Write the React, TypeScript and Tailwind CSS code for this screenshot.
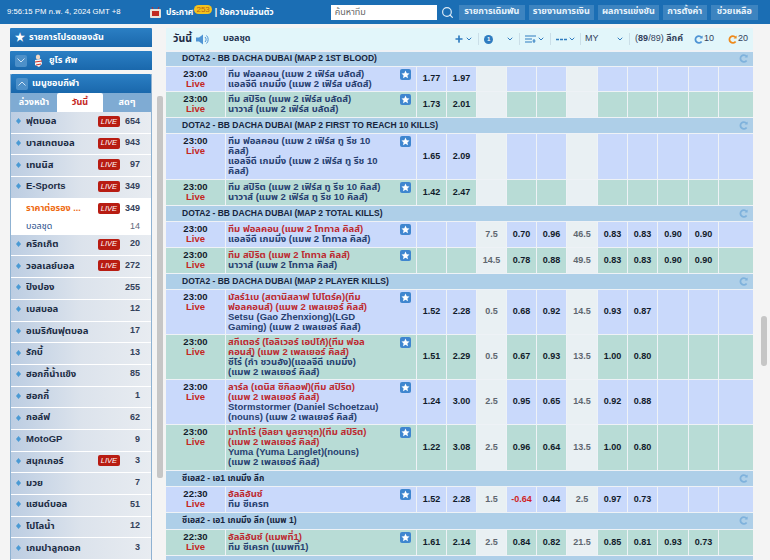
import { Search, Plus, ChevronDown } from 'lucide-react';

const font = "font-['Liberation_Sans','Noto_Sans_Thai',sans-serif]";

const gridCols =
  'grid shrink-0 grid-cols-[59px_190px_29px_29px_29px_29px_29px_30px_29px_29px_30px_29px_34px] gap-x-px';

type Row = {
  time?: string;
  home: string[];
  away: string[];
  h: string;
  tone: 'blue' | 'green';
  homeRed?: boolean;
  odds: string[];
};

type Section = { title: string; h: string; rows: Row[] };

const sections: Section[] = [
  {
    title: 'DOTA2 - BB DACHA DUBAI (MAP 2 1ST BLOOD)',
    h: 'h-[14px]',
    rows: [
      { home: ['ทีม ฟอลคอน (แมพ 2 เฟิร์ส บลัดส์)'], away: ['แอลจีดี เกมมิ่ง (แมพ 2 เฟิร์ส บลัดส์)'], h: 'h-[24px]', tone: 'blue', odds: ['1.77', '1.97'] },
      { home: ['ทีม สปิริต (แมพ 2 เฟิร์ส บลัดส์)'], away: ['นาวาส์ (แมพ 2 เฟิร์ส บลัดส์)'], h: 'h-[25px]', tone: 'green', odds: ['1.73', '2.01'] },
    ],
  },
  {
    title: 'DOTA2 - BB DACHA DUBAI (MAP 2 FIRST TO REACH 10 KILLS)',
    h: 'h-[15px]',
    rows: [
      { home: ['ทีม ฟอลคอน (แมพ 2 เฟิร์ส ทู รีช 10', 'คิลส์)'], away: ['แอลจีดี เกมมิ่ง (แมพ 2 เฟิร์ส ทู รีช 10', 'คิลส์)'], h: 'h-[45px]', tone: 'blue', odds: ['1.65', '2.09'] },
      { home: ['ทีม สปิริต (แมพ 2 เฟิร์ส ทู รีช 10 คิลส์)'], away: ['นาวาส์ (แมพ 2 เฟิร์ส ทู รีช 10 คิลส์)'], h: 'h-[25px]', tone: 'green', odds: ['1.42', '2.47'] },
    ],
  },
  {
    title: 'DOTA2 - BB DACHA DUBAI (MAP 2 TOTAL KILLS)',
    h: 'h-[15px]',
    rows: [
      { home: ['ทีม ฟอลคอน (แมพ 2 โททาล คิลส์)'], away: ['แอลจีดี เกมมิ่ง (แมพ 2 โททาล คิลส์)'], h: 'h-[25px]', tone: 'blue', homeRed: true, odds: ['', '', '7.5', '0.70', '0.96', '46.5', '0.83', '0.83', '0.90', '0.90'] },
      { home: ['ทีม สปิริต (แมพ 2 โททาล คิลส์)'], away: ['นาวาส์ (แมพ 2 โททาล คิลส์)'], h: 'h-[25px]', tone: 'green', homeRed: true, odds: ['', '', '14.5', '0.78', '0.88', '49.5', '0.83', '0.83', '0.90', '0.90'] },
    ],
  },
  {
    title: 'DOTA2 - BB DACHA DUBAI (MAP 2 PLAYER KILLS)',
    h: 'h-[15px]',
    rows: [
      { home: ['มัลร์1เบ (สตานิสลาฟ โปโตร์ค)(ทีม', 'ฟอลคอนส์) (แมพ 2 เพลเยอร์ คิลส์)'], away: ['Setsu (Gao Zhenxiong)(LGD', 'Gaming) (แมพ 2 เพลเยอร์ คิลส์)'], h: 'h-[44px]', tone: 'blue', homeRed: true, odds: ['1.52', '2.28', '0.5', '0.68', '0.92', '14.5', '0.93', '0.87'] },
      { home: ['สกีเตอร์ (โอลิเวอร์ เอปโก้)(ทีม ฟอล', 'คอนส์) (แมพ 2 เพลเยอร์ คิลส์)'], away: ['ซีโร่ (ก้ำ ชวนอัง)(แอลจีดี เกมมิ่ง)', '(แมพ 2 เพลเยอร์ คิลส์)'], h: 'h-[44px]', tone: 'green', homeRed: true, odds: ['1.51', '2.29', '0.5', '0.67', '0.93', '13.5', '1.00', '0.80'] },
      { home: ['ลาร์ล (เดนิส ซิกิลอฟ)(ทีม สปิริต)', '(แมพ 2 เพลเยอร์ คิลส์)'], away: ['Stormstormer (Daniel Schoetzau)', '(nouns) (แมพ 2 เพลเยอร์ คิลส์)'], h: 'h-[44px]', tone: 'blue', homeRed: true, odds: ['1.24', '3.00', '2.5', '0.95', '0.65', '14.5', '0.92', '0.88'] },
      { home: ['มาโทโร่ (อิลยา มูลยาชุก)(ทีม สปิริต)', '(แมพ 2 เพลเยอร์ คิลส์)'], away: ['Yuma (Yuma Langlet)(nouns)', '(แมพ 2 เพลเยอร์ คิลส์)'], h: 'h-[45px]', tone: 'green', homeRed: true, odds: ['1.22', '3.08', '2.5', '0.96', '0.64', '13.5', '1.00', '0.80'] },
    ],
  },
  {
    title: 'ซีเอส2 - เอ1 เกมมิ่ง ลีก',
    h: 'h-[15px]',
    rows: [
      { time: '22:30', home: ['อัลลิอันซ์'], away: ['ทีม ซีเครท'], h: 'h-[25px]', tone: 'blue', homeRed: true, odds: ['1.52', '2.28', '1.5', '-0.64', '0.44', '2.5', '0.97', '0.73'] },
    ],
  },
  {
    title: 'ซีเอส2 - เอ1 เกมมิ่ง ลีก (แมพ 1)',
    h: 'h-[16px]',
    rows: [
      { time: '22:30', home: ['อัลลิอันซ์ (แมพที่1)'], away: ['ทีม ซีเครท (แมพที่1)'], h: 'h-[25px]', tone: 'green', homeRed: true, odds: ['1.61', '2.14', '2.5', '0.84', '0.82', '21.5', '0.85', '0.81', '0.93', '0.73'] },
    ],
  },
];

const sports: { name: string; count: string; live?: boolean }[] = [
  { name: 'ฟุตบอล', count: '654', live: true },
  { name: 'บาสเกตบอล', count: '943', live: true },
  { name: 'เทนนิส', count: '97', live: true },
  { name: 'E-Sports', count: '349', live: true },
  { name: 'คริกเก็ต', count: '20', live: true },
  { name: 'วอลเลย์บอล', count: '272', live: true },
  { name: 'ปิงปอง', count: '255' },
  { name: 'เบสบอล', count: '12' },
  { name: 'อเมริกันฟุตบอล', count: '17' },
  { name: 'รักบี้', count: '13' },
  { name: 'ฮอกกี้น้ำแข็ง', count: '85' },
  { name: 'ฮอกกี้', count: '1' },
  { name: 'กอล์ฟ', count: '62' },
  { name: 'MotoGP', count: '9' },
  { name: 'สนุกเกอร์', count: '3', live: true },
  { name: 'มวย', count: '7' },
  { name: 'แฮนด์บอล', count: '51' },
  { name: 'โปโลน้ำ', count: '12' },
  { name: 'เกมปาลูกดอก', count: '3' },
];

const StarBox = () => (
  <svg width="11" height="11" viewBox="0 0 11 11" className="shrink-0">
    <rect width="11" height="11" rx="2" fill="#3f86cf" />
    <path d="M5.5 1.6l1.2 2.6 2.8.3-2.1 1.9.6 2.8-2.5-1.4-2.5 1.4.6-2.8L1.5 4.5l2.8-.3z" fill="#fff" />
  </svg>
);

const Refresh = ({ color = '#7fb2dc' }: { color?: string }) => (
  <svg width="9" height="9" viewBox="0 0 9 9" className="shrink-0">
    <path d="M7.4 2.2A3.4 3.4 0 1 0 7.6 6.4" fill="none" stroke={color} strokeWidth="1.8" />
    <path d="M8.6 0.6v3H5.6z" fill={color} />
  </svg>
);

const LiveBadge = () => (
  <span className="flex h-[11px] w-[22px] shrink-0 items-center justify-center rounded-[2px] bg-[#b81c12] text-[7.5px] italic text-white">
    LIVE
  </span>
);

const Arrow = () => (
  <svg width="5" height="6" viewBox="0 0 5 6" className="shrink-0">
    <path d="M0 3l2.5-3L5 3 2.5 6z" fill="#4a9ad4" />
  </svg>
);

const SideHead = ({ children }: { children: React.ReactNode }) => (
  <div className="flex h-[19px] shrink-0 items-center gap-1 rounded-t-[1px] bg-gradient-to-b from-[#2b7fc4] to-[#1a68ac] px-[5px] text-[9px] font-bold text-white">
    {children}
  </div>
);

const Chev = ({ up }: { up?: boolean }) => (
  <span className="flex h-3 w-3 items-center justify-center rounded-[2px] bg-[#4d90c9]">
    <svg width="8" height="5" viewBox="0 0 8 5">
      <path d={up ? 'M0.5 4.5L4 1l3.5 3.5' : 'M0.5 0.5L4 4l3.5-3.5'} fill="none" stroke="#cfe4f5" strokeWidth="1" />
    </svg>
  </span>
);

const SportItem = ({ name, count, live }: { name: string; count: string; live?: boolean }) => (
  <div className="flex h-[21.7px] shrink-0 items-center border-b border-white bg-gradient-to-r from-[#bccde2] via-[#dce3ec] to-[#e8ecf1] pb-[2px] pl-[5px] pr-[11px]">
    <Arrow />
    <span className="ml-[5px] flex-1 truncate text-[9.5px] font-bold text-[#1c2c44]">{name}</span>
    {live && <LiveBadge />}
    <span className="w-[20px] text-right text-[9px] font-bold text-[#33415a]">{count}</span>
  </div>
);

const Sidebar = () => (
  <div className="flex w-[142px] shrink-0 flex-col gap-[4px]">
    <SideHead>
      <span className="text-[11px] leading-none">★</span>
      <span>รายการโปรดของฉัน</span>
    </SideHead>
    <SideHead>
      <Chev />
      <svg width="10" height="14" viewBox="0 0 10 14" className="mx-[2px]">
        <ellipse cx="5" cy="3" rx="2.2" ry="2.6" fill="#f2d8c4" />
        <path d="M2 6l6-1 1 5-3 3-4-2z" fill="#f4f4f4" />
        <path d="M2 8l7-1M3 11l5-1" stroke="#d2352c" strokeWidth="1.2" />
      </svg>
      <span>ยูโร คัพ</span>
    </SideHead>
    <div className="flex shrink-0 flex-col border-x border-[#8fb2d2]">
      <SideHead>
        <Chev up />
        <span>เมนูชอบกีฬา</span>
      </SideHead>
      <div className="flex h-[19px] shrink-0 bg-[#7fabd3] text-[9px] font-bold text-white">
        <span className="flex w-[46px] items-center justify-center">ล่วงหน้า</span>
        <span className="flex w-[46px] items-center justify-center rounded-t-[2px] bg-white text-[#c4271f]">วันนี้</span>
        <span className="flex w-[48px] items-center justify-center">สดๆ</span>
      </div>
      {sports.slice(0, 4).map((s) => (
        <SportItem key={s.name} {...s} />
      ))}
      <div className="shrink-0 bg-white">
        <div className="flex h-[20px] items-center pl-[15px] pr-[11px]">
          <span className="flex-1 truncate text-[9px] font-bold text-[#ee6a12]">ราคาต่อรอง ...</span>
          <LiveBadge />
          <span className="w-[20px] text-right text-[9px] font-bold text-[#33415a]">349</span>
        </div>
        <div className="flex h-[16px] items-center pl-[15px] pr-[11px]">
          <span className="flex-1 text-[9px] text-[#2a4f8c]">บอลชุด</span>
          <span className="w-[20px] text-right text-[9px] text-[#5e6a7c]">14</span>
        </div>
      </div>
      {sports.slice(4).map((s) => (
        <SportItem key={s.name} {...s} />
      ))}
    </div>
  </div>
);

const Toolbar = () => (
  <div className="flex h-[22px] shrink-0 items-center bg-[#e2f6fa] pl-[7px] pr-[5px] text-[9px] text-[#33425c]">
    <span className="text-[10.5px] font-bold text-[#1b2a44]">วันนี้</span>
    <svg width="13" height="11" viewBox="0 0 13 11" className="ml-[4px]">
      <path d="M0 3.5h3L7 .5v10l-4-3H0z" fill="#4f94d4" />
      <path d="M9 3a3.4 3.4 0 0 1 0 5M10.5 1.5a5.6 5.6 0 0 1 0 8" fill="none" stroke="#4f94d4" strokeWidth="1" />
    </svg>
    <span className="ml-[14px] flex-1 text-[9px] font-bold text-[#1f3350]">บอลชุด</span>
    <Plus size={10} strokeWidth={4} className="text-[#2f7cc0]" />
    <ChevronDown size={8} strokeWidth={3} className="ml-[1px] text-[#2f7cc0]" />
    <span className="mx-[5px] h-3 w-px bg-[#cbdfe8]" />
    <span className="flex h-[9px] w-[9px] items-center justify-center rounded-full bg-[#2f7cc0] text-[6px] font-bold text-white">1</span>
    <ChevronDown size={8} strokeWidth={3} className="ml-[13px] text-[#2f7cc0]" />
    <span className="mx-[5px] h-3 w-px bg-[#cbdfe8]" />
    <svg width="11" height="9" viewBox="0 0 11 9">
      <path d="M0 1h11M0 4h7M0 7h7M9 4v4M7.5 6h3" stroke="#2f7cc0" strokeWidth="1" fill="none" />
    </svg>
    <ChevronDown size={8} strokeWidth={3} className="ml-[1px] text-[#2f7cc0]" />
    <span className="mx-[5px] h-3 w-px bg-[#cbdfe8]" />
    <svg width="11" height="3" viewBox="0 0 11 3">
      <path d="M0 1.5h3M4 1.5h3M8 1.5h3" stroke="#2f7cc0" strokeWidth="1.6" />
    </svg>
    <ChevronDown size={8} strokeWidth={3} className="ml-[1px] text-[#2f7cc0]" />
    <span className="mx-[4px] h-3 w-px bg-[#cbdfe8]" />
    <span className="w-[31px]">MY</span>
    <ChevronDown size={8} strokeWidth={3} className="text-[#2f7cc0]" />
    <span className="mx-[5px] h-3 w-px bg-[#cbdfe8]" />
    <span>
      (<b>89</b>/89) <b>ลีกค์</b>
    </span>
    <span className="ml-[11px] flex items-center gap-[1px]">
      <Refresh color="#4f94d4" />
      10
    </span>
    <span className="ml-[14px] flex items-center gap-[1px]">
      <Refresh color="#ee8a1c" />
      20
    </span>
  </div>
);

const OddsRow = ({ row }: { row: Row }) => {
  const bg = row.tone === 'blue' ? 'bg-[#c9d9fb]' : 'bg-[#b8dcd6]';
  const cells = Array.from({ length: 11 }, (_, i) => row.odds[i] ?? '');
  return (
    <div className={`${gridCols} ${row.h}`}>
      <div className={`${bg} pt-[2px] text-center text-[9.5px] font-bold leading-[10px] text-[#141c2c]`}>
        {row.time ?? '23:00'}
        <div className="text-[#c4271f]">Live</div>
      </div>
      <div className={`${bg} flex justify-between pl-[2px] pr-[5px] pt-[2px] text-[9.5px] font-bold leading-[10px]`}>
        <div className="whitespace-nowrap">
          {row.home.map((l) => (
            <div key={l} className={row.homeRed ? 'text-[#bd2a30]' : 'text-[#274070]'}>
              {l}
            </div>
          ))}
          {row.away.map((l) => (
            <div key={l} className="text-[#274070]">
              {l}
            </div>
          ))}
        </div>
        <StarBox />
      </div>
      {cells.map((v, i) => {
        const line = i === 2 || i === 5;
        return (
          <div
            key={i}
            className={`flex items-center justify-center text-[9px] font-bold ${line ? 'bg-[#e9f0f3] text-[#5f6770]' : `${bg} ${v.startsWith('-') ? 'text-[#d01f26]' : 'text-[#111a2a]'}`}`}
          >
            {v}
          </div>
        );
      })}
    </div>
  );
};

export default function App() {
  return (
    <div className={`${font} flex h-[560px] w-[770px] flex-col overflow-hidden bg-[#f4f4f4]`}>
      <header className="flex h-6 shrink-0 items-center bg-[#1b6eb4] pl-[7px] text-white">
        <span className="w-[143px] shrink-0 text-[7.7px] whitespace-nowrap">9:56:15 PM ก.พ. 4, 2024 GMT +8</span>
        <svg width="11" height="11" viewBox="0 0 11 11" className="shrink-0">
          <rect y="2" width="11" height="9" rx="1" fill="#e9e3da" />
          <rect x="2" y="4" width="7" height="5" fill="#c22a20" />
          <path d="M3 2L2 0M8 2l1-2" stroke="#c22a20" />
        </svg>
        <span className="ml-[5px] shrink-0 text-[8.5px] font-bold">ประกาศ</span>
        <span className="relative -top-[3px] ml-[1px] shrink-0 rounded-full bg-[#f4c21d] px-[2px] text-[8px] leading-[9px] text-[#b6621a]">253</span>
        <span className="ml-[3px] w-[116px] shrink-0 text-[8.5px] font-bold">| ข้อความส่วนตัว</span>
        <div className="h-[15px] w-[106px] shrink-0 bg-white pl-1 text-[9px] leading-[15px] text-[#666]">ค้นหาทีม</div>
        <Search size={13} strokeWidth={2.2} className="ml-[4px] shrink-0 text-[#dcebf7]" />
        <nav className="ml-[5px] flex shrink-0 gap-[4px] text-[9px] font-bold text-[#e8f3fb]">
          <span className="flex h-[15px] w-[66px] items-center justify-center bg-[#3d84c0]">รายการเดิมพัน</span>
          <span className="flex h-[15px] w-[65px] items-center justify-center bg-[#3d84c0]">รายงานการเงิน</span>
          <span className="flex h-[15px] w-[61px] items-center justify-center bg-[#3d84c0]">ผลการแข่งขัน</span>
          <span className="flex h-[15px] w-[44px] items-center justify-center bg-[#3d84c0]">การตั้งค่า</span>
          <span className="flex h-[15px] w-[47px] items-center justify-center bg-[#3d84c0]">ช่วยเหลือ</span>
        </nav>
      </header>
      <div className="flex min-h-0 flex-1 pl-[10px] pt-[4px]">
        <Sidebar />
        <div className="ml-[5px] mt-[68px] h-[382px] w-[6px] shrink-0 rounded-[2px] bg-[#c6c6c6]" />
        <main className="ml-[3px] flex w-[587px] shrink-0 flex-col bg-white">
          <Toolbar />
          <div className="flex shrink-0 flex-col gap-y-px bg-[#eef2f6] pt-[2px]">
            {sections.map((s) => (
              <div key={s.title} className="flex shrink-0 flex-col gap-y-px">
                <div className={`${s.h} flex shrink-0 items-center justify-between bg-[#aecfe8] pb-[1px] pl-4 pr-[5px] text-[8.5px] font-bold text-[#16243c]`}>
                  <span>{s.title}</span>
                  <Refresh />
                </div>
                {s.rows.map((r) => (
                  <OddsRow key={r.home[0]} row={r} />
                ))}
              </div>
            ))}
            <div className="h-[15px] shrink-0 bg-[#aecfe8]" />
          </div>
        </main>
        <div className="ml-[8px] mt-[288px] h-[50px] w-[6px] shrink-0 rounded-[3px] bg-[#c6c6c6]" />
      </div>
    </div>
  );
}
